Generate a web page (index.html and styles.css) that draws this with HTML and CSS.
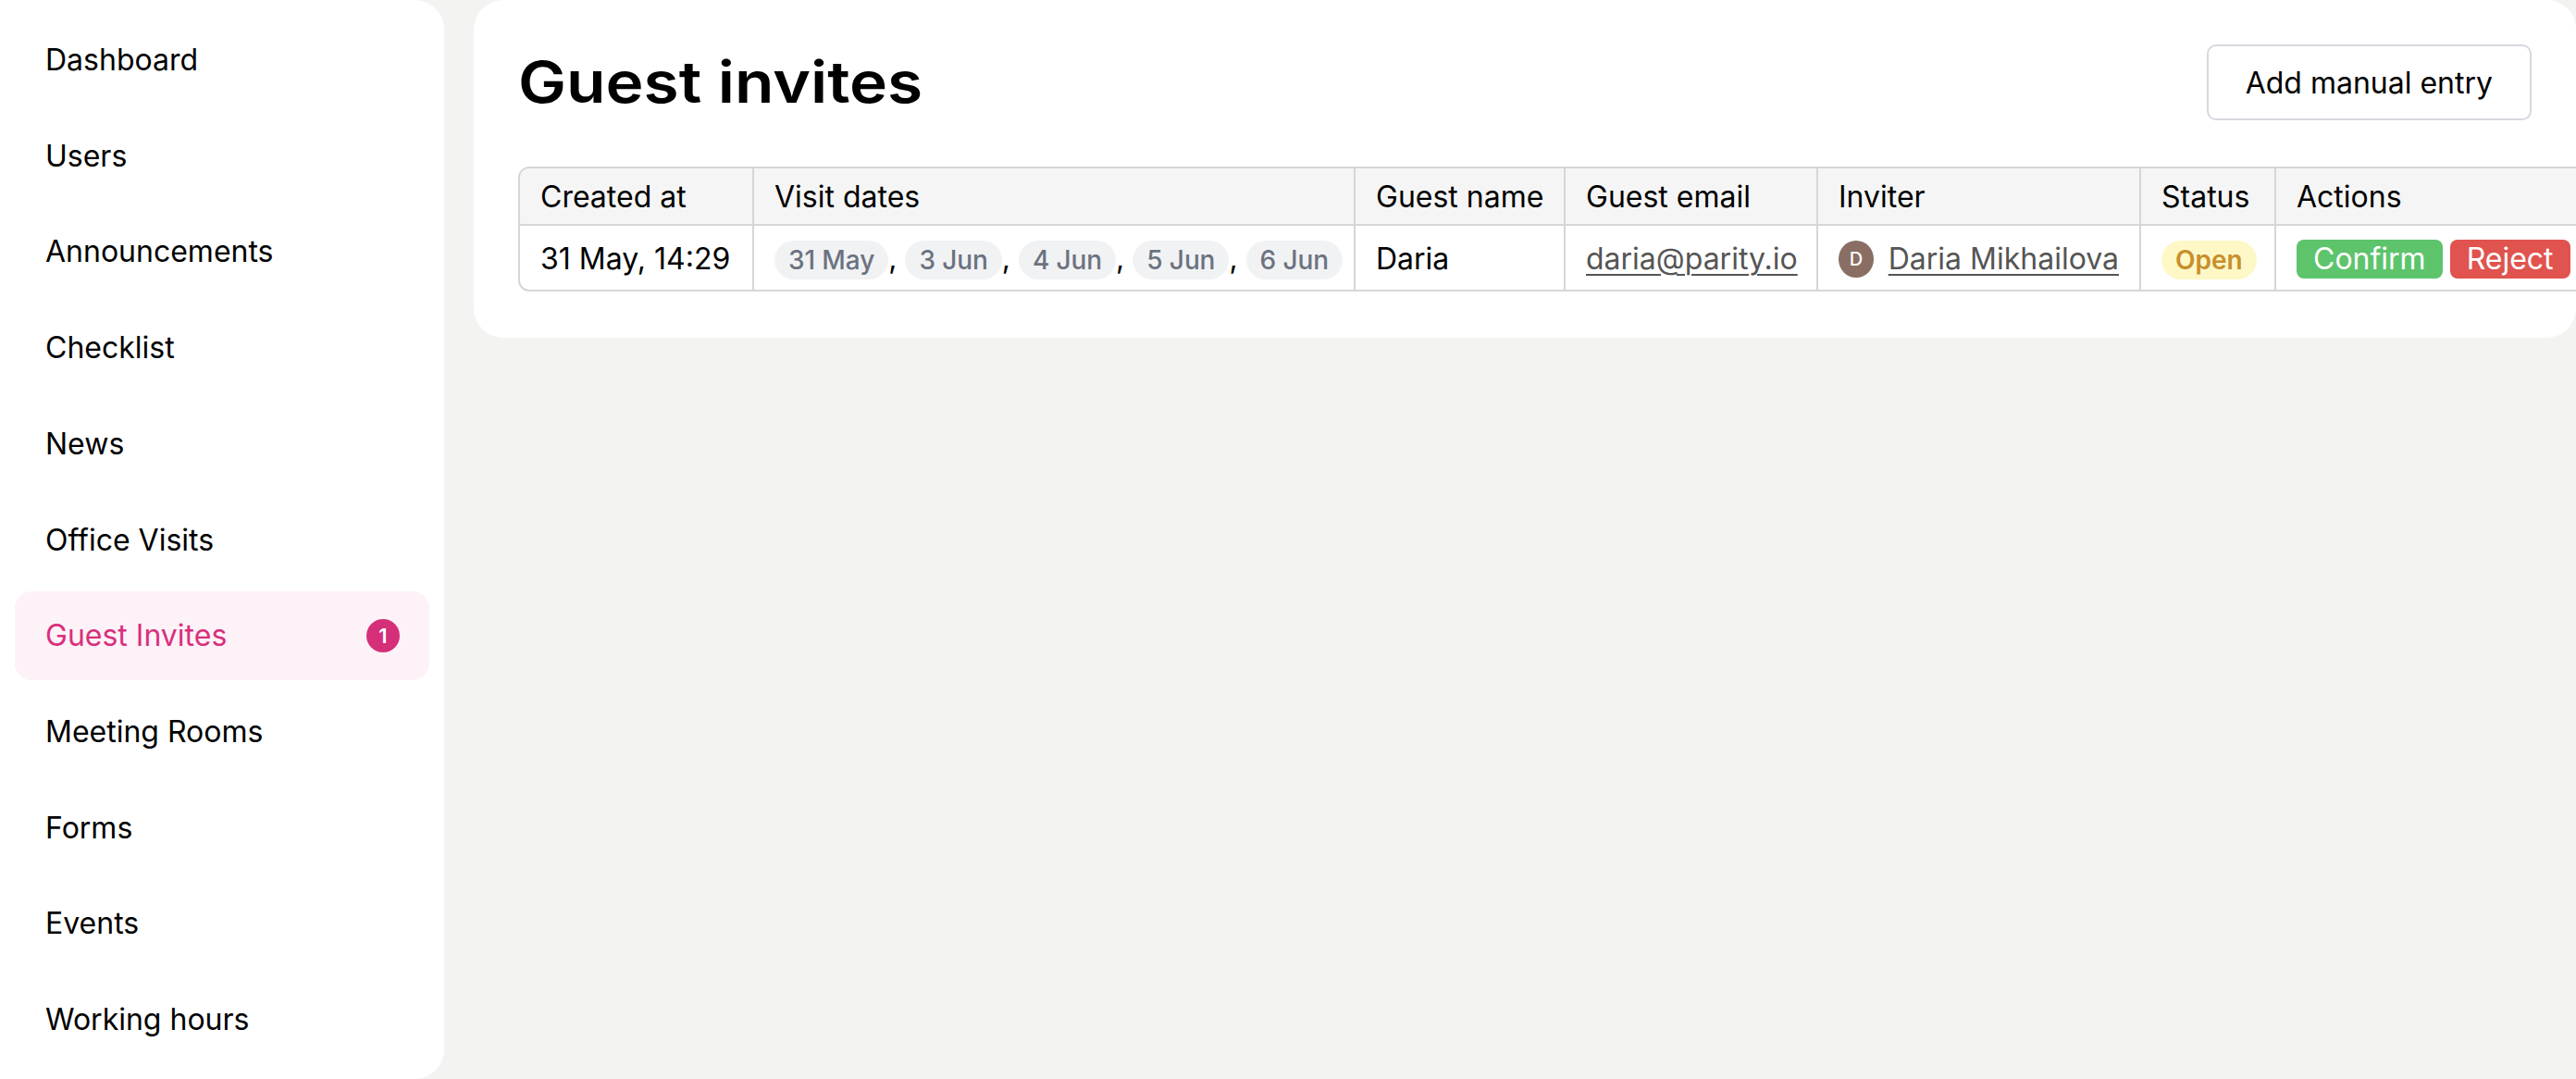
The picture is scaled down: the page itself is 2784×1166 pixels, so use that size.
FILE: index.html
```html
<!DOCTYPE html>
<html lang="en">
<head>
<meta charset="utf-8">
<title>Guest invites</title>
<link rel="stylesheet" href="styles.css">
</head>
<body>
<div class="app">
  <nav class="sidebar">
    <a class="nav-item">Dashboard</a>
    <a class="nav-item">Users</a>
    <a class="nav-item">Announcements</a>
    <a class="nav-item">Checklist</a>
    <a class="nav-item">News</a>
    <a class="nav-item">Office Visits</a>
    <a class="nav-item active">Guest Invites <span class="badge">1</span></a>
    <a class="nav-item">Meeting Rooms</a>
    <a class="nav-item">Forms</a>
    <a class="nav-item">Events</a>
    <a class="nav-item">Working hours</a>
  </nav>
  <main class="main">
    <section class="card">
      <header class="card-head">
        <h1 class="title">Guest invites</h1>
        <button class="btn-outline">Add manual entry</button>
      </header>
      <table class="table">
        <colgroup>
          <col class="c1"><col class="c2"><col class="c3"><col class="c4"><col class="c5"><col class="c6"><col class="c7">
        </colgroup>
        <thead>
          <tr>
            <th>Created at</th>
            <th>Visit dates</th>
            <th>Guest name</th>
            <th>Guest email</th>
            <th>Inviter</th>
            <th>Status</th>
            <th>Actions</th>
          </tr>
        </thead>
        <tbody>
          <tr>
            <td>31 May, 14:29</td>
            <td><div class="dates"><span class="pill">31 May</span>, <span class="pill">3 Jun</span>, <span class="pill">4 Jun</span>, <span class="pill">5 Jun</span>, <span class="pill">6 Jun</span></div></td>
            <td>Daria</td>
            <td><a class="link">daria@parity.io</a></td>
            <td><div class="inviter"><span class="avatar">D</span><a class="link">Daria Mikhailova</a></div></td>
            <td><span class="status">Open</span></td>
            <td><div class="actions"><button class="btn btn-confirm">Confirm</button><button class="btn btn-reject">Reject</button></div></td>
          </tr>
        </tbody>
      </table>
    </section>
  </main>
</div>
</body>
</html>
```

FILE: styles.css
```css
* { box-sizing: border-box; }
html, body {
  margin: 0;
  padding: 0;
  overflow: hidden;
  background: #f3f3f2;
  font-family: Inter, "Noto Sans", sans-serif;
  color: #000;
}
.app {
  display: flex;
  height: 1166px;
  width: 2784px;
}
.sidebar {
  width: 480px;
  flex: none;
  background: #fff;
  border-radius: 0 32px 32px 0;
  padding: 17px 16px 16px;
  display: flex;
  flex-direction: column;
  gap: 8px;
}
.nav-item {
  height: 96px;
  display: flex;
  align-items: center;
  justify-content: space-between;
  padding: 0 32px 0 33px;
  font-size: 32px;
  line-height: 40px;
  border-radius: 18px;
  color: #000;
}
.nav-item.active {
  background: #fdf2f8;
  color: #d8307c;
}
.badge {
  width: 36px;
  height: 36px;
  border-radius: 50%;
  background: #d62f79;
  color: #fff;
  font-size: 22px;
  font-weight: 600;
  display: flex;
  align-items: center;
  justify-content: center;
  line-height: 1;
}
.main {
  flex: 1;
  min-width: 0;
  padding-left: 32px;
}
.card {
  background: #fff;
  border-radius: 32px;
  padding: 48px 48px 50px;
}
.card-head {
  display: flex;
  align-items: center;
  justify-content: space-between;
  margin-bottom: 50px;
}
.title {
  margin: 0;
  font-size: 62px;
  font-weight: 600;
  line-height: 82px;
  letter-spacing: 0;
  transform: scaleX(1.12);
  transform-origin: left center;
}
.btn-outline {
  height: 82px;
  padding: 0 40px;
  border: 2px solid #d5d8de;
  border-radius: 10px;
  background: #fff;
  font-family: inherit;
  font-size: 32px;
  color: #000;
}
.table {
  table-layout: fixed;
  width: 2244px;
  border-collapse: separate;
  border-spacing: 0;
  border: 2px solid #d6d6d6;
  border-radius: 12px;
  font-size: 32px;
}
.c1 { width: 253px; }
.c2 { width: 650px; }
.c3 { width: 227px; }
.c4 { width: 273px; }
.c5 { width: 349px; }
.c6 { width: 146px; }
.c7 { width: 342px; }
.table th {
  background: #f5f5f5;
  text-align: left;
  font-weight: 400;
  padding: 15px 22px 13px 22px;
  line-height: 32px;
  border-right: 2px solid #d6d6d6;
  border-bottom: 2px solid #d6d6d6;
  white-space: nowrap;
}
.table th:first-child { border-top-left-radius: 10px; }
.table td {
  padding: 13px 22px 11px;
  line-height: 43px;
  border-right: 2px solid #d6d6d6;
  white-space: nowrap;
  vertical-align: middle;
}
.table th:last-child, .table td:last-child { border-right: none; }
.dates { white-space: nowrap; }
.pill {
  display: inline-block;
  height: 42px;
  line-height: 42px;
  padding: 0 15px;
  border-radius: 21px;
  background: #f1f2f4;
  color: #6b7280;
  font-size: 28px;
  font-weight: 500;
  letter-spacing: -0.1px;
  vertical-align: middle;
}
.link {
  color: #555;
  text-decoration: underline;
  text-decoration-thickness: 2px;
  text-underline-offset: 5px;
}
.inviter {
  display: flex;
  align-items: center;
  gap: 16px;
}
.avatar {
  width: 40px;
  height: 40px;
  border-radius: 50%;
  background: #8a6e63;
  color: #fff;
  font-size: 20px;
  font-weight: 500;
  display: flex;
  align-items: center;
  justify-content: center;
  line-height: 1;
}
.status {
  display: inline-block;
  height: 42px;
  line-height: 42px;
  padding: 0 15px;
  border-radius: 21px;
  background: #fdf8c6;
  color: #c88f2c;
  font-size: 28px;
  font-weight: 600;
  vertical-align: middle;
}
.actions {
  display: flex;
  align-items: center;
  gap: 8px;
}
.btn {
  height: 42px;
  padding: 0 18px;
  border: none;
  border-radius: 8px;
  color: #fff;
  font-family: inherit;
  font-size: 32px;
  line-height: 42px;
}
.btn-confirm { background: #5dc46c; }
.btn-reject { background: #e0534e; }
```
